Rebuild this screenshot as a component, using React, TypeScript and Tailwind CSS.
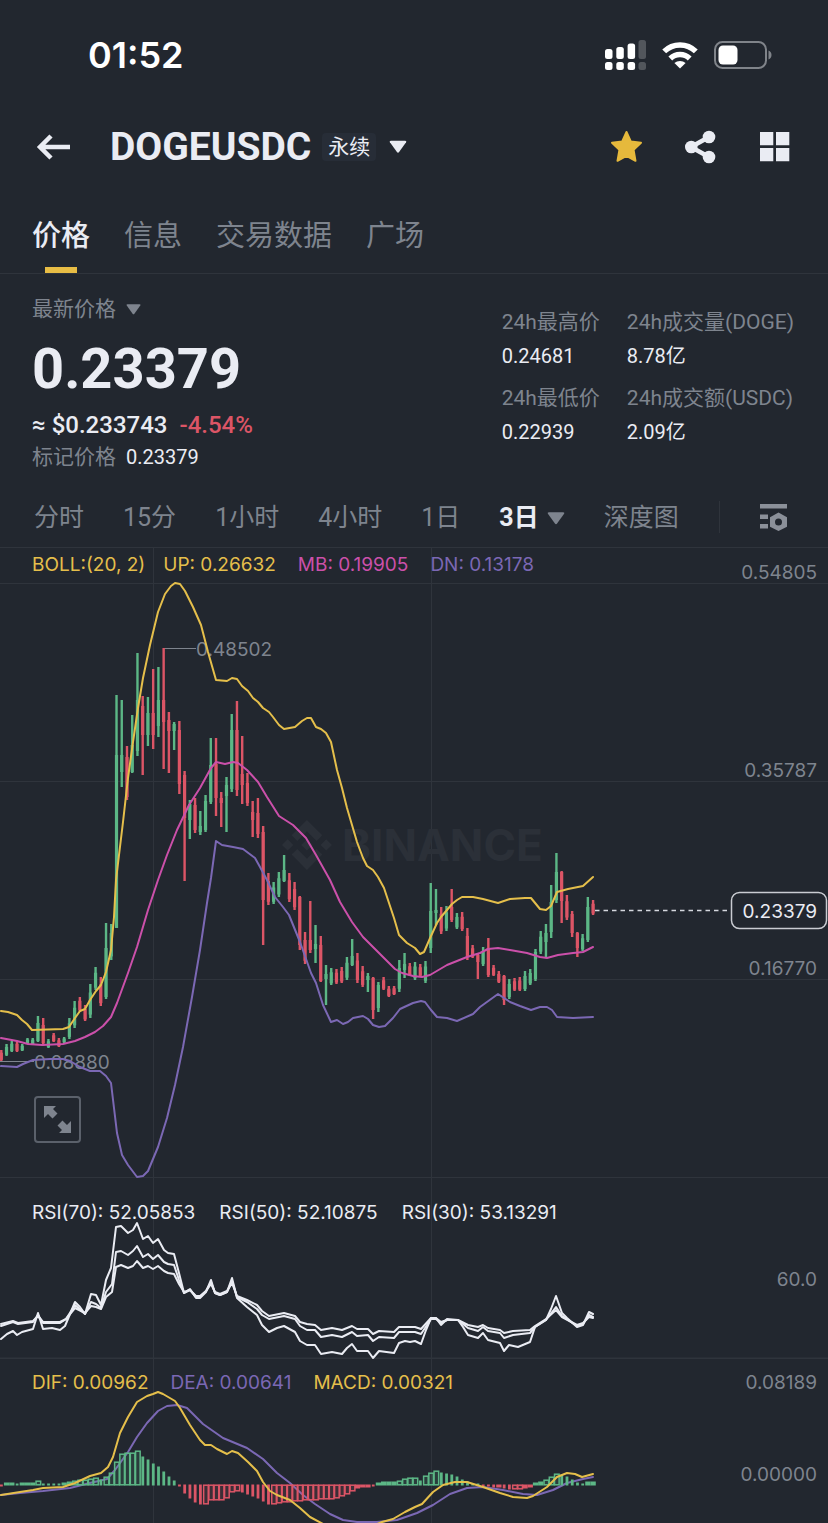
import { useState } from 'react'
import { clsx } from 'clsx'

type Candle = [dir: 'u' | 'd', high: number, low: number, top?: number, bottom?: number]

const GREEN = '#5cb786'
const RED = '#dc5566'
const YELLOW = '#e5bf4b'
const PINK = '#cb50aa'
const PURPLE = '#7b68b4'
const GRID = '#2f343c'
const MUTED = '#7e848e'

const SECTIONS = ['价格', '信息', '交易数据', '广场']
const INTERVALS = ['分时', '15分', '1小时', '4小时', '1日', '3日', '深度图']

const STATS = [
  { label: '24h最高价', value: '0.24681' },
  { label: '24h成交量(DOGE)', value: '8.78亿' },
  { label: '24h最低价', value: '0.22939' },
  { label: '24h成交额(USDC)', value: '2.09亿' },
]

// direction, wick top, wick bottom, optional body top / bottom (canvas units)
const CANDLES: Candle[] = [
  ['d', 1050, 1061], ['u', 1044, 1056], ['u', 1041, 1052], ['d', 1041, 1052], ['u', 1044, 1051],
  ['u', 1038, 1044], ['u', 1038, 1045], ['u', 1016, 1042, 1023, 1041], ['d', 1018, 1046], ['u', 1039, 1048],
  ['d', 1033, 1042], ['d', 1038, 1047], ['u', 1037, 1043], ['u', 1018, 1039], ['u', 1001, 1028],
  ['d', 997, 1012], ['d', 1005, 1021], ['u', 984, 1018], ['u', 967, 990], ['d', 977, 1006],
  ['u', 923, 999, 948, 997], ['u', 924, 960], ['u', 695, 928, 755, 928], ['u', 700, 787, 755, 772], ['d', 746, 800, 757, 797],
  ['u', 715, 773, 745, 772], ['u', 653, 756, 700, 751], ['d', 696, 775, 706, 735], ['u', 697, 746, 713, 735], ['d', 669, 749, 713, 735],
  ['u', 667, 737, 700, 726], ['d', 648, 769, 700, 722], ['d', 712, 773, 720, 731], ['u', 722, 750, 724, 731], ['d', 721, 794, 730, 784],
  ['d', 771, 881, 775, 818], ['u', 800, 839, 804, 820], ['d', 798, 833, 805, 830], ['u', 811, 835, 826, 832], ['u', 795, 832, 801, 830],
  ['u', 738, 804, 765, 802], ['d', 738, 816, 764, 798], ['d', 792, 827, 798, 803], ['u', 777, 832, 785, 796], ['u', 714, 792, 730, 789],
  ['d', 701, 796, 730, 790], ['d', 736, 804, 774, 785], ['d', 773, 806, 783, 803], ['d', 801, 837, 812, 820], ['d', 798, 838, 813, 834],
  ['d', 826, 945, 832, 900], ['d', 873, 905], ['u', 882, 904], ['u', 872, 897], ['u', 855, 882, 870, 881],
  ['d', 873, 902], ['d', 882, 910], ['d', 896, 950, 897, 945], ['d', 932, 964], ['d', 901, 953, 940, 950],
  ['u', 925, 963, 944, 949], ['d', 936, 982, 945, 981], ['u', 965, 1005, 974, 979], ['u', 968, 985], ['d', 969, 984],
  ['d', 967, 983], ['u', 957, 980], ['u', 939, 966, 956, 965], ['d', 953, 983], ['d', 966, 987],
  ['u', 973, 992, 976, 980], ['d', 977, 1019, 978, 1010], ['u', 982, 1012, 985, 1008], ['d', 977, 990], ['d', 986, 997],
  ['d', 986, 995], ['u', 960, 992], ['u', 953, 978, 964, 970], ['d', 963, 976], ['u', 962, 980],
  ['d', 964, 977], ['u', 961, 983], ['u', 883, 953, 911, 948], ['u', 889, 925, 910, 913], ['d', 907, 934],
  ['u', 906, 931], ['d', 889, 922, 907, 920], ['u', 913, 929], ['d', 912, 931], ['d', 928, 960],
  ['d', 945, 958], ['d', 953, 979, 955, 962], ['u', 947, 966], ['d', 938, 977, 948, 975], ['d', 965, 976],
  ['d', 971, 983], ['d', 975, 1005, 976, 1000], ['u', 979, 999], ['d', 978, 991], ['d', 977, 991],
  ['u', 971, 991], ['u', 969, 985], ['u', 949, 981, 952, 979], ['u', 931, 954], ['u', 924, 957, 933, 942],
  ['u', 885, 938, 902, 932], ['u', 853, 903, 872, 900], ['d', 871, 923, 872, 901], ['d', 895, 920], ['d', 911, 937, 914, 933],
  ['d', 932, 957, 933, 948], ['u', 934, 951], ['u', 897, 942, 907, 940], ['d', 900, 915],
]

const BOLL_UP =
  '1,1011 8,1012 17,1015 22,1020 27,1024 32,1030 63,1029 69,1027 75,1018 80,1011 85,1009 90,1000 96,991 101,985 106,972 111,950 114,917 116,880 119,855 123,822 128,778 133,742 138,708 143,678 150,645 158,612 165,594 171,586 175,583 180,584 185,591 193,607 201,625 208,652 216,680 227,681 232,678 237,679 242,686 248,691 253,698 258,702 263,708 269,712 273,717 279,725 284,729 295,727 302,721 307,718 311,718 316,727 321,729 326,733 331,742 337,770 342,788 347,808 352,825 357,842 363,858 367,866 373,870 378,877 384,888 389,903 394,918 399,935 407,943 415,948 420,954 424,952 431,936 437,923 441,917 447,910 452,904 457,900 462,897 473,897 483,899 498,903 510,899 525,898 531,898 540,909 546,910 551,906 557,892 568,889 583,886 593,877'
const BOLL_MB =
  '1,1038 17,1041 28,1044 42,1045 63,1044 75,1041 85,1037 95,1032 103,1026 111,1017 117,1003 128,973 137,947 148,910 158,880 167,855 177,830 189,805 200,788 211,768 216,762 225,764 233,762 238,763 247,770 258,782 267,797 279,816 293,825 306,838 316,855 330,880 340,902 352,922 363,937 378,952 395,969 402,973 413,976 422,977 430,975 447,965 467,957 480,953 488,949 498,948 510,950 527,953 540,957 547,958 558,955 573,953 583,952 593,947'
const BOLL_DN =
  '1,1066 17,1067 23,1064 33,1060 50,1059 63,1059 70,1061 80,1067 90,1071 100,1071 106,1076 111,1083 117,1133 122,1155 128,1165 137,1177 143,1176 148,1171 158,1147 167,1118 175,1085 183,1047 192,997 200,950 207,903 211,878 216,841 222,845 233,847 243,849 255,858 260,867 267,880 275,897 283,907 289,915 300,942 311,973 316,983 323,1005 331,1022 337,1020 343,1024 348,1022 353,1018 363,1016 368,1019 373,1025 379,1027 385,1026 393,1018 400,1009 413,1003 421,1001 425,1002 431,1010 437,1017 447,1018 457,1021 473,1014 480,1007 498,994 510,1002 520,1006 531,1010 540,1007 547,1007 552,1010 557,1017 573,1018 593,1017'

const RSI_LINES = [
  '1,1339 7,1334 13,1331 17,1335 22,1332 33,1329 38,1313 43,1329 52,1328 60,1330 65,1326 70,1314 75,1302 80,1307 85,1314 91,1294 96,1295 101,1305 106,1280 111,1268 116,1227 121,1226 128,1233 133,1230 137,1223 143,1239 148,1236 153,1243 158,1239 164,1250 168,1253 174,1254 179,1273 184,1293 190,1289 196,1298 200,1298 206,1292 211,1280 215,1293 220,1295 227,1292 232,1278 237,1298 247,1307 257,1315 262,1325 269,1332 277,1328 284,1326 295,1332 300,1341 307,1345 315,1345 321,1354 332,1352 342,1354 347,1348 352,1344 357,1351 368,1351 373,1358 379,1351 394,1353 399,1343 405,1341 410,1342 415,1341 421,1344 426,1330 431,1318 436,1318 441,1325 447,1319 458,1320 463,1327 468,1335 478,1338 483,1333 488,1340 500,1343 504,1351 509,1345 518,1347 530,1342 535,1327 546,1320 551,1309 556,1296 562,1313 567,1318 577,1327 583,1325 589,1312 593,1314',
  '1,1326 13,1322 18,1324 33,1322 38,1315 43,1323 60,1323 66,1319 75,1305 85,1314 91,1302 96,1304 101,1308 106,1292 112,1284 116,1252 121,1251 128,1255 133,1251 137,1246 143,1257 148,1254 153,1259 158,1255 164,1262 168,1264 174,1265 179,1280 184,1293 190,1290 196,1297 200,1297 206,1291 211,1282 215,1293 220,1295 227,1292 232,1281 237,1297 247,1302 257,1309 262,1315 269,1319 284,1316 295,1319 300,1326 307,1330 315,1330 321,1337 332,1335 342,1337 352,1332 357,1336 368,1335 373,1341 379,1337 394,1338 399,1332 415,1332 421,1334 431,1319 436,1319 441,1323 447,1320 458,1320 468,1328 478,1331 483,1327 488,1331 500,1333 504,1338 513,1335 530,1333 535,1327 546,1320 556,1307 562,1316 577,1326 583,1324 589,1315 593,1317',
  '1,1324 13,1321 18,1323 33,1321 38,1316 43,1322 60,1322 66,1319 75,1308 85,1313 91,1306 96,1307 101,1309 106,1297 112,1292 116,1267 121,1265 128,1268 133,1266 137,1261 143,1268 148,1266 153,1269 158,1266 164,1271 168,1273 174,1274 179,1284 184,1292 190,1290 196,1296 200,1296 206,1291 211,1284 215,1292 220,1294 227,1291 232,1283 237,1296 247,1300 257,1305 262,1311 269,1316 284,1313 295,1316 300,1322 307,1324 315,1325 321,1330 332,1328 342,1330 352,1326 357,1329 368,1329 373,1334 379,1331 394,1332 399,1327 415,1327 421,1329 431,1318 436,1318 441,1322 447,1320 458,1320 468,1325 478,1327 483,1325 488,1328 500,1330 504,1333 513,1331 530,1330 535,1326 546,1319 556,1310 562,1317 577,1325 583,1323 589,1317 593,1318',
]

const MACD_BARS = [
  -1, 3, 3, 2, 3, 3, 3, 5, 2, 2, 2, 2, 3, 4, 5, 6, 6, 7, 8, 6, 9, 13, 24, 32, 33, 33, 35, 29, 26, 22, 19, 14, 9, 5,
  -1, -9, -14, -18, -20, -20, -16, -16, -16, -14, -8, -7, -8, -10, -12, -14, -17, -20, -20, -19, -18, -18, -17, -17, -16, -16,
  -16, -15, -15, -15, -14, -12, -10, -7, -4, -3, -3, -1, 3, 4, 4, 4, 5, 7, 8, 8, 5, 10, 13, 15, 13, 12, 11, 9, 6, 4,
  2, 2, -2, -2, -3, -3, -4, -5, -5, -5, -4, -3, 3, 4, 6, 9, 12, 11, 9, 6, 3, 2, 4, 4,
]
const DIF =
  '1,1495 20,1492 33,1490 43,1488 63,1487 75,1483 90,1476 101,1473 108,1467 113,1457 120,1433 128,1417 137,1402 147,1396 153,1394 158,1392 163,1394 175,1401 180,1408 190,1425 200,1440 205,1445 211,1445 217,1449 227,1454 232,1451 238,1453 248,1462 257,1471 263,1482 270,1491 277,1495 290,1500 300,1508 310,1517 325,1525 345,1531 365,1529 382,1522 393,1519 405,1512 415,1507 422,1504 433,1492 443,1485 455,1482 467,1482 483,1487 500,1493 513,1497 527,1498 533,1496 547,1487 557,1477 567,1473 575,1474 582,1477 593,1474'
const DEA =
  '1,1495 20,1493 43,1491 70,1488 90,1483 107,1479 115,1470 128,1452 137,1437 147,1423 158,1411 167,1406 177,1405 187,1408 203,1424 223,1438 247,1448 263,1459 277,1473 290,1483 303,1495 315,1504 330,1514 343,1520 357,1522 377,1522 397,1520 417,1513 433,1505 450,1494 467,1488 483,1487 503,1490 523,1494 537,1495 553,1490 567,1483 583,1479 593,1477'

const xAt = (i: number) => 1.3 + i * 5.237

function Caret({ className }: { className: string }) {
  return (
    <svg viewBox="0 0 20 14" className={className} fill="currentColor" aria-hidden="true">
      <path d="M2 0h16q2 0 1 1.8L11.2 12.6q-1.2 1.4-2.4 0L1 1.8Q0 0 2 0z" />
    </svg>
  )
}

function Line({ points, color }: { points: string; color: string }) {
  return <polyline points={points} fill="none" stroke={color} strokeWidth="2" strokeLinejoin="round" strokeLinecap="round" />
}

function VerticalGrid({ from, to }: { from: number; to: number }) {
  return <path d={`M153.5 ${from}V${to}M431.5 ${from}V${to}`} stroke={GRID} />
}

function AxisLabel({ y, children }: { y: number; children: string }) {
  return (
    <text x="817" y={y} textAnchor="end" fill={MUTED} fontSize="19">{children}</text>
  )
}

function Legend({ items, className }: { items: { text: string; color: string }[]; className: string }) {
  return (
    <div className={clsx('absolute left-8 flex text-[19px] leading-6 whitespace-nowrap', className)}>
      {items.map(item => <span key={item.text} className={item.color}>{item.text}</span>)}
    </div>
  )
}

function MacdBar({ index }: { index: number }) {
  const v = MACD_BARS[index]
  const prev = MACD_BARS[index - 1] ?? 0
  const size = Math.abs(v)
  const color = v > 0 ? GREEN : RED
  const x = xAt(index)
  const y = v > 0 ? 1485.5 - size : 1484.5

  // rising bars are hollow, falling ones solid and thin
  if (v >= prev && size > 4) {
    return <rect x={x - 1.9} y={y + 0.7} width="4.6" height={size - 1.4} fill={color} fillOpacity="0.15" stroke={color} strokeWidth="1.5" />
  }
  const wide = v >= prev && size > 2
  return <rect x={x - (wide ? 2.6 : 1.3)} y={y} width={wide ? 5.3 : 2.8} height={Math.max(2, size)} fill={color} />
}

function StatusBar() {
  return (
    <div className="flex h-[110px] items-center justify-between pr-14 pl-[88px] text-white">
      <span className="font-[Inter,sans-serif] text-[36px] font-semibold">01:52</span>
      <div className="flex items-center gap-4">
        <svg viewBox="0 0 42 30" className="h-[30px] w-[42px]" fill="currentColor" aria-hidden="true">
          <rect x="1" y="9" width="7.5" height="10" rx="2.500" />
          <rect x="12.3" y="7" width="7.5" height="12" rx="2.500" />
          <rect x="23.6" y="3.500" width="7.5" height="15.500" rx="2.500" />
          <rect x="34.500" y="0" width="7.5" height="19" rx="2.500" opacity=".22" />
          <rect x="1" y="22" width="7.5" height="8" rx="2.500" />
          <rect x="12.3" y="22" width="7.5" height="8" rx="2.500" />
          <rect x="23.6" y="22" width="7.5" height="8" rx="2.500" />
          <rect x="34.500" y="22" width="7.5" height="8" rx="2.500" opacity=".22" />
        </svg>
        <svg viewBox="0 0 36 28" className="h-7 w-9" fill="none" stroke="currentColor" strokeWidth="5.500" aria-hidden="true">
          <path d="M2.200 10.400a22.500 22.500 0 0 1 31.600 0" />
          <path d="M8.300 17.400a14 14 0 0 1 19.400 0" />
          <path d="M12.400 22a8.500 8.500 0 0 1 11.200 0L18 27.500z" fill="currentColor" stroke="none" />
        </svg>
        <svg viewBox="0 0 58 28" className="h-7 w-[58px]" aria-hidden="true">
          <rect x="1" y="1" width="51" height="26" rx="7.5" fill="none" stroke="#80848a" strokeWidth="2" />
          <rect x="4.5" y="4.500" width="19" height="19" rx="4.5" fill="currentColor" />
          <path d="M54.5 9.5q3 1.4 3 4.5t-3 4.500z" fill="#80848a" />
        </svg>
      </div>
    </div>
  )
}

function Header() {
  return (
    <header className="flex h-[74px] items-center pr-[38px] pl-9 text-[#eaecf3]">
      <button type="button" aria-label="返回" className="mr-10">
        <svg viewBox="0 0 34 26" className="h-[26px] w-[34px]" fill="none" stroke="currentColor" strokeWidth="4.5" aria-hidden="true">
          <path d="M34 13H5M15 2 4 13l11 11" />
        </svg>
      </button>
      <h1 className="text-[39px] leading-none font-bold">DOGEUSDC</h1>
      <button type="button" className="ml-[11px] flex items-center gap-[13px]">
        <span className="rounded bg-[#272d37] px-[6px] text-[21px] leading-7">永续</span>
        <Caret className="h-[14px] w-[18px]" />
      </button>
      <div className="ml-auto flex items-center gap-[41px]">
        <button type="button" aria-label="收藏">
          <svg viewBox="0 0 34 34" className="size-[34px]" fill="#e6b93c" stroke="#e6b93c" strokeWidth="2" strokeLinejoin="round" aria-hidden="true">
            <path d="M16.500 2l4.400 9.600 10.100 1.100-7.400 7.200 1.900 10.900-9-5-9 5 1.900-10.900L2 12.700l10.100-1.100z" />
          </svg>
        </button>
        <button type="button" aria-label="分享">
          <svg viewBox="0 0 34 34" className="size-[34px]" fill="currentColor" aria-hidden="true">
            <path d="M6 17 24 7M6 17l18 10" stroke="currentColor" strokeWidth="4.500" />
            <circle cx="6.300" cy="17" r="6.300" />
            <circle cx="24" cy="7" r="6.300" />
            <circle cx="24" cy="27" r="6.300" />
          </svg>
        </button>
        <button type="button" aria-label="更多">
          <svg viewBox="0 0 30 30" className="size-[30px]" fill="currentColor" aria-hidden="true">
            <path d="M0 0h13.300v13.300H0zM16 0H29.300v13.300H16zM0 16h13.300v13.300H0zM16 16H29.300v13.300H16z" />
          </svg>
        </button>
      </div>
    </header>
  )
}

function PriceChart() {
  return (
    <section className="relative">
      <svg viewBox="0 548 828 630" className="block w-full" role="img" aria-label="DOGEUSDC K线">
        <path d="M0 583.5H828M0 781.5H828M0 979.5H828M0 1177.5H828" stroke={GRID} />
        <VerticalGrid from={548} to={1178} />

        <g fill="#2b3038">
          <path
            transform="translate(282 820) scale(2.08)"
            d="M16.624 13.92l2.717 2.716-7.353 7.353-7.353-7.352 2.718-2.717 4.635 4.66zM21.26 9.284L24 12l-2.715 2.716L18.568 12zM11.989 9.285l2.716 2.691-2.716 2.717L9.272 12zM2.716 9.284L5.409 12l-2.692 2.692L0 12zM11.989.012l7.353 7.329-2.718 2.715-4.635-4.635-4.636 4.66-2.717-2.716z"
          />
          <text x="342" y="861" fontSize="44" fontWeight="700">BINANCE</text>
        </g>

        <g fill={MUTED} fontSize="19">
          <path d="M164 648.5h32M0 1061.5h34" stroke={MUTED} />
          <text x="196" y="656">0.48502</text>
          <text x="34" y="1069">0.08880</text>
        </g>

        {CANDLES.map(([dir, high, low, top = high + (low - high) * 0.25, bottom = low - (low - high) * 0.1], i) => (
          <g key={i} fill={dir === 'u' ? GREEN : RED}>
            <rect x={xAt(i) - 1.2} y={high} width="2.4" height={low - high} />
            <rect x={xAt(i) - 1.6} y={top} width="3.2" height={bottom - top} />
          </g>
        ))}

        <Line points={BOLL_DN} color={PURPLE} />
        <Line points={BOLL_MB} color={PINK} />
        <Line points={BOLL_UP} color={YELLOW} />

        <AxisLabel y={579}>0.54805</AxisLabel>
        <AxisLabel y={777}>0.35787</AxisLabel>
        <AxisLabel y={975}>0.16770</AxisLabel>

        {/* last price */}
        <path d="M595 910.500H728" stroke="#d5d8de" strokeWidth="1.500" strokeDasharray="4.500 4" />
        <rect x="731.500" y="892.500" width="95" height="36" rx="8" fill="#22272f" stroke="#c9ccd2" strokeWidth="1.500" />
        <text x="817" y="918" textAnchor="end" fontSize="19" fill="#eaecf3">0.23379</text>
      </svg>
      <Legend
        className="top-[5px] gap-[18px]"
        items={[
          { text: 'BOLL:(20, 2)', color: 'text-[#e5bf4b]' },
          { text: 'UP: 0.26632', color: 'mr-1 text-[#e5bf4b]' },
          { text: 'MB: 0.19905', color: 'mr-1 text-[#cb50aa]' },
          { text: 'DN: 0.13178', color: 'text-[#7b68b4]' },
        ]}
      />
      <button type="button" aria-label="全屏" className="absolute bottom-[35px] left-[34px] flex size-[47px] items-center justify-center rounded border-2 border-[#5b616b] text-[#7e848e]">
        <svg viewBox="0 0 27 27" className="size-[27px]" fill="currentColor" aria-hidden="true">
          <path d="M0 0h12L9 3l4.500 4.500-5 5L4 8 0 12z" />
          <path d="M27 27H15l3-3-4.500-4.500 5-5L23 19l4-4z" />
        </svg>
      </button>
    </section>
  )
}

function RsiChart() {
  return (
    <section className="relative">
      <svg viewBox="0 1178 828 181" className="block w-full" role="img" aria-label="RSI">
        <VerticalGrid from={1178} to={1359} />
        <path d="M0 1358.500H828" stroke={GRID} strokeWidth="2" />
        {RSI_LINES.map(points => <Line key={points} points={points} color="#eaecf3" />)}
        <AxisLabel y={1286}>60.0</AxisLabel>
      </svg>
      <Legend
        className="top-[23px] gap-6 text-[#eaecf3]"
        items={[
          { text: 'RSI(70): 52.05853', color: '' },
          { text: 'RSI(50): 52.10875', color: '' },
          { text: 'RSI(30): 53.13291', color: '' },
        ]}
      />
    </section>
  )
}

function MacdChart() {
  return (
    <section className="relative">
      <svg viewBox="0 1359 828 164" className="block w-full" role="img" aria-label="MACD">
        <VerticalGrid from={1359} to={1523} />
        <Line points={DEA} color={PURPLE} />
        {MACD_BARS.map((_, i) => <MacdBar key={i} index={i} />)}
        <Line points={DIF} color={YELLOW} />
        <AxisLabel y={1389}>0.08189</AxisLabel>
        <AxisLabel y={1481}>0.00000</AxisLabel>
      </svg>
      <Legend
        className="top-3 gap-[22px]"
        items={[
          { text: 'DIF: 0.00962', color: 'text-[#e5bf4b]' },
          { text: 'DEA: 0.00641', color: 'text-[#7b68b4]' },
          { text: 'MACD: 0.00321', color: 'text-[#e5bf4b]' },
        ]}
      />
    </section>
  )
}

export default function App() {
  const [section, setSection] = useState('价格')
  const [interval, setInterval] = useState('3日')

  return (
    <div className="min-h-screen overflow-hidden bg-[#22272f] font-[Roboto,'Noto_Sans_CJK_SC',sans-serif] text-[#eaecf3]">
      <StatusBar />
      <Header />

      <nav className="flex h-[90px] gap-[34px] border-b border-[#2f343c] pl-8">
        {SECTIONS.map(s => (
          <button key={s} type="button" onClick={() => setSection(s)}
            className={clsx('relative h-full pt-4 text-[29px]', section === s ? 'font-medium text-[#eaecf3]' : 'text-[#7e848e]')}>
            {s}
            {section === s && <span className="absolute bottom-0 left-1/2 h-[6px] w-8 -translate-x-1/2 bg-[#e8bd45]" />}
          </button>
        ))}
      </nav>

      {/* Ticker */}
      <section className="flex justify-between pt-[21px] pr-[34px] pb-[13px] pl-8">
        <div>
          <button type="button" className="flex items-center gap-[10px] text-[21px] leading-7 text-[#7e848e]">
            最新价格
            <Caret className="h-[11px] w-[15px]" />
          </button>
          <p className="mt-[14px] text-[56px] leading-[64px] font-bold">0.23379</p>
          <p className="mt-2 flex gap-3 text-[24px] leading-8 font-medium">
            <span>≈ $0.233743</span>
            <span className="text-[#dc5566]">-4.54%</span>
          </p>
          <p className="flex gap-[10px] text-[20px] leading-8">
            <span className="text-[21px] text-[#7e848e]">标记价格</span>
            <span>0.23379</span>
          </p>
        </div>
        <dl className="grid grid-cols-[auto_auto] content-start gap-x-[27px] gap-y-2 pt-[11px]">
          {STATS.map(s => (
            <div key={s.label}>
              <dt className="text-[21px] leading-8 text-[#7e848e]">{s.label}</dt>
              <dd className="text-[20px] leading-9">{s.value}</dd>
            </div>
          ))}
        </dl>
      </section>

      <div className="flex h-[62px] items-center border-b border-[#2f343c] pr-10 pl-[34px]">
        <div className="flex gap-[39px] pt-[3px] text-[25px]">
          {INTERVALS.map(t => (
            <button key={t} type="button" onClick={() => setInterval(t)}
              className={clsx('flex items-center gap-2', interval === t ? 'font-bold' : 'text-[#7e848e]')}>
              {t}
              {t === '3日' && <Caret className="h-[13px] w-[18px] text-[#7e848e]" />}
            </button>
          ))}
        </div>
        <span className="ml-auto h-8 w-px bg-[#2f343c]" />
        <button type="button" aria-label="图表设置" className="ml-10 text-[#8b9099]">
          <svg viewBox="0 0 28 28" className="size-7" fill="currentColor" aria-hidden="true">
            <path d="M0 1h27v4.500H0zM0 11.500h8V16H0zM0 21h8v4.500H0z" />
            <path fillRule="evenodd" d="M18.500 9.500l8.500 4.700v9.600l-8.500 4.200-8.500-4.200v-9.600zm0 6a3.500 3.500 0 1 0 0 7 3.500 3.500 0 0 0 0-7z" />
          </svg>
        </button>
      </div>

      <main className="font-[Inter,sans-serif]">
        <PriceChart />
        <RsiChart />
        <MacdChart />
      </main>
    </div>
  )
}
